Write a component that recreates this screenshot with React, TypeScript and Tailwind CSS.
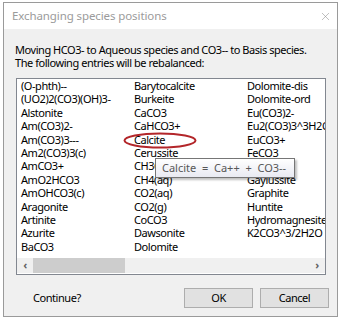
import { X } from 'lucide-react';

const COL1 = ['(O-phth)--', '(UO2)2(CO3)(OH)3-', 'Alstonite', 'Am(CO3)2-', 'Am(CO3)3---', 'Am2(CO3)3(c)', 'AmCO3+', 'AmO2HCO3', 'AmOHCO3(c)', 'Aragonite', 'Artinite', 'Azurite', 'BaCO3'];
const COL2 = ['Barytocalcite', 'Burkeite', 'CaCO3', 'CaHCO3+', 'Calcite', 'Cerussite', 'CH3COOH', 'CH4(aq)', 'CO2(aq)', 'CO2(g)', 'CoCO3', 'Dawsonite', 'Dolomite'];
const COL3 = ['Dolomite-dis', 'Dolomite-ord', 'Eu(CO3)2-', 'Eu2(CO3)3^3H2O', 'EuCO3+', 'FeCO3', 'FeHCO3+', 'Gaylussite', 'Graphite', 'Huntite', 'Hydromagnesite', 'K2CO3^3/2H2O'];

function Column({ items }: { items: string[] }) {
  return (
    <div className="flex w-[113px] shrink-0 flex-col">
      {items.map((s) => (
        <div key={s} className="h-[13.4px] whitespace-nowrap leading-[13.4px]">
          {s}
        </div>
      ))}
    </div>
  );
}

export default function App() {
  return (
    <div className="h-[321px] w-[343px] bg-white pl-[3px] pt-[2px] font-['Noto_Sans',sans-serif] text-[11px] tracking-[-0.45px] text-black">
      <div className="relative flex h-[315px] w-[335px] flex-col border border-[#9a9a9a]">
        <div className="flex h-[26px] items-center justify-between bg-white pl-[8px] pr-[5px]">
          <span className="text-[11.5px] tracking-[-0.1px] text-[#9b9b9b]">Exchanging species positions</span>
          <X className="size-[13px] text-[#8a8a8a]" strokeWidth={1} />
        </div>

        <div className="flex flex-1 flex-col bg-[#f0f0f0] pl-[11px] pt-[14px]">
          <p className="leading-[13px]">Moving HCO3- to Aqueous species and CO3-- to Basis species.</p>
          <p className="leading-[13px]">The following entries will be rebalanced:</p>

          <div className="ml-[1px] mt-[9px] flex h-[197px] w-[310px] flex-col border border-[#828790] bg-white">
            <div className="flex h-[178px] overflow-hidden pl-[4px]">
              <Column items={COL1} />
              <Column items={COL2} />
              <Column items={COL3} />
            </div>
            <div className="mt-auto mb-[1px] flex h-[15px] items-center bg-[#f0f0f0]">
              <span className="flex w-[16px] justify-center text-[11px] font-bold text-[#606060]">‹</span>
              <div className="h-full w-[92px] bg-[#cdcdcd]" />
              <span className="ml-auto flex w-[16px] justify-center text-[11px] font-bold text-[#606060]">›</span>
            </div>
          </div>

          <div className="mt-[13px] flex items-center pr-[8px]">
            <span className="ml-[18px]">Continue?</span>
            <button type="button" className="ml-auto h-[20px] w-[69px] border border-[#adadad] bg-[#e1e1e1]">
              OK
            </button>
            <button type="button" className="ml-[7px] h-[20px] w-[69px] border border-[#adadad] bg-[#e1e1e1]">
              Cancel
            </button>
          </div>
        </div>

        <svg className="absolute left-[119px] top-[129px]" width="74" height="17" viewBox="0 0 74 17">
          <ellipse cx="37" cy="8.5" rx="35.5" ry="7" fill="none" stroke="#b3262a" strokeWidth="2" />
        </svg>

        <div className="absolute left-[151px] top-[155px] flex h-[20px] w-[140px] items-center whitespace-pre border border-[#767676] bg-gradient-to-b from-white to-[#e9eaf2] pl-[6px] tracking-normal text-[#575757] shadow-[2px_2px_2px_rgba(0,0,0,0.25)]">
          Calcite  =  Ca++  +  CO3--
        </div>
      </div>
    </div>
  );
}
